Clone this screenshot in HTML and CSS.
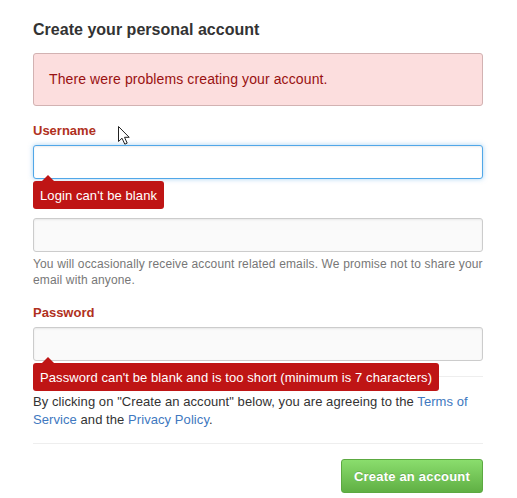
FILE: index.html
```
<!DOCTYPE html>
<html lang="en">
<head>
    <meta charset="UTF-8">
    <meta name="viewport" content="width=device-width, initial-scale=1.0">
    <title>Create your personal account</title>
    <link rel="stylesheet" href="styles.css">
</head>
<body>
    <form class="signup">
        <h1>Create your personal account</h1>

        <div class="flash-error"><span>There were problems creating your account.</span></div>

        <div class="form-group">
            <label for="username">Username</label>
            <div class="field">
                <input type="text" id="username" class="focused">
                <div class="error login-error">Login can't be blank</div>
            </div>
        </div>

        <div class="form-group email-group">
            <input type="text" id="email" aria-label="Email">
            <p class="note">You will occasionally receive account related emails. We promise not to share your email with anyone.</p>
        </div>

        <div class="form-group password-group">
            <label for="password">Password</label>
            <div class="field">
                <input type="password" id="password">
                <div class="error password-error">Password can't be blank and is too short (minimum is 7 characters)</div>
            </div>
        </div>

        <p class="terms">By clicking on "Create an account" below, you are agreeing to the <a href="#">Terms of Service</a> and the <a href="#">Privacy Policy</a>.</p>

        <div class="actions">
            <button type="button">Create an account</button>
        </div>
    </form>

    <svg class="cursor" width="14" height="22" viewBox="0 0 14 22">
        <path d="M1.5 1.5v15l3.5-3.3 2.8 6 2.4-1.1-2.7-5.8h4.7z" fill="#fff" stroke="#222" stroke-width="1"/>
    </svg>
</body>
</html>
```

FILE: styles.css
```
* {
    box-sizing: border-box;
}
body {
    margin: 0;
    background: #fff;
    color: #333;
    font: 13px/18px "Liberation Sans", Arial, sans-serif;
}
.signup {
    width: 450px;
    margin-left: 33px;
    padding-top: 20px;
}
h1 {
    margin: 0 0 13px;
    font-size: 16px;
    line-height: 20px;
    letter-spacing: 0.02px;
}
.flash-error {
    height: 53px;
    margin-bottom: 16px;
    padding: 0 15px;
    border: 1px solid #d2b2b2;
    border-radius: 3px;
    background: #fcdede;
    color: #911;
    font-size: 14px;
    line-height: 51px;
    letter-spacing: 0.11px;
}
label {
    display: block;
    height: 23px;
    color: #b03020;
    font-weight: bold;
    line-height: 18px;
}
.field {
    position: relative;
}
input {
    display: block;
    width: 100%;
    height: 34px;
    padding: 7px 8px;
    border: 1px solid #ccc;
    border-radius: 3px;
    background: #fafafa;
    box-shadow: inset 0 1px 2px rgba(0, 0, 0, 0.075);
    outline: none;
}
input.focused {
    border-color: #51a7e8;
    background: #fff;
    box-shadow: inset 0 1px 2px rgba(0, 0, 0, 0.075), 0 0 5px rgba(81, 167, 232, 0.5);
}
.error {
    position: absolute;
    top: 36px;
    left: 0;
    height: 28px;
    padding: 0 7px;
    border-radius: 3px;
    background: #bf1515;
    color: #fff;
    line-height: 29px;
    letter-spacing: 0.09px;
    white-space: nowrap;
}
.error::before {
    content: "";
    position: absolute;
    top: -6px;
    left: 9px;
    border: 6px solid transparent;
    border-top: 0;
    border-bottom-color: #bf1515;
}
.login-error {
    width: 131px;
}
.password-error {
    width: 406px;
}
.email-group {
    margin-top: 39px;
}
.note {
    margin: 4px 0 0;
    color: #777;
    font-size: 12px;
    line-height: 16px;
    letter-spacing: 0.14px;
}
.password-group {
    margin-top: 16px;
}
.terms {
    margin: 15px 0 0;
    padding: 16px 0 14px;
    border-top: 1px solid #eee;
    border-bottom: 1px solid #eee;
    letter-spacing: 0.07px;
}
a {
    color: #4078c0;
    text-decoration: none;
}
.actions {
    display: flex;
    justify-content: flex-end;
    padding-top: 15px;
}
button {
    width: 142px;
    height: 34px;
    padding: 0;
    border: 1px solid #5ca941;
    border-radius: 3px;
    background: linear-gradient(#8add6d, #60b044);
    color: #fff;
    font: bold 13px "Liberation Sans", Arial, sans-serif;
    letter-spacing: 0.2px;
    text-shadow: 0 -1px 0 rgba(0, 0, 0, 0.15);
}
.cursor {
    position: absolute;
    top: 125px;
    left: 117px;
}
```
